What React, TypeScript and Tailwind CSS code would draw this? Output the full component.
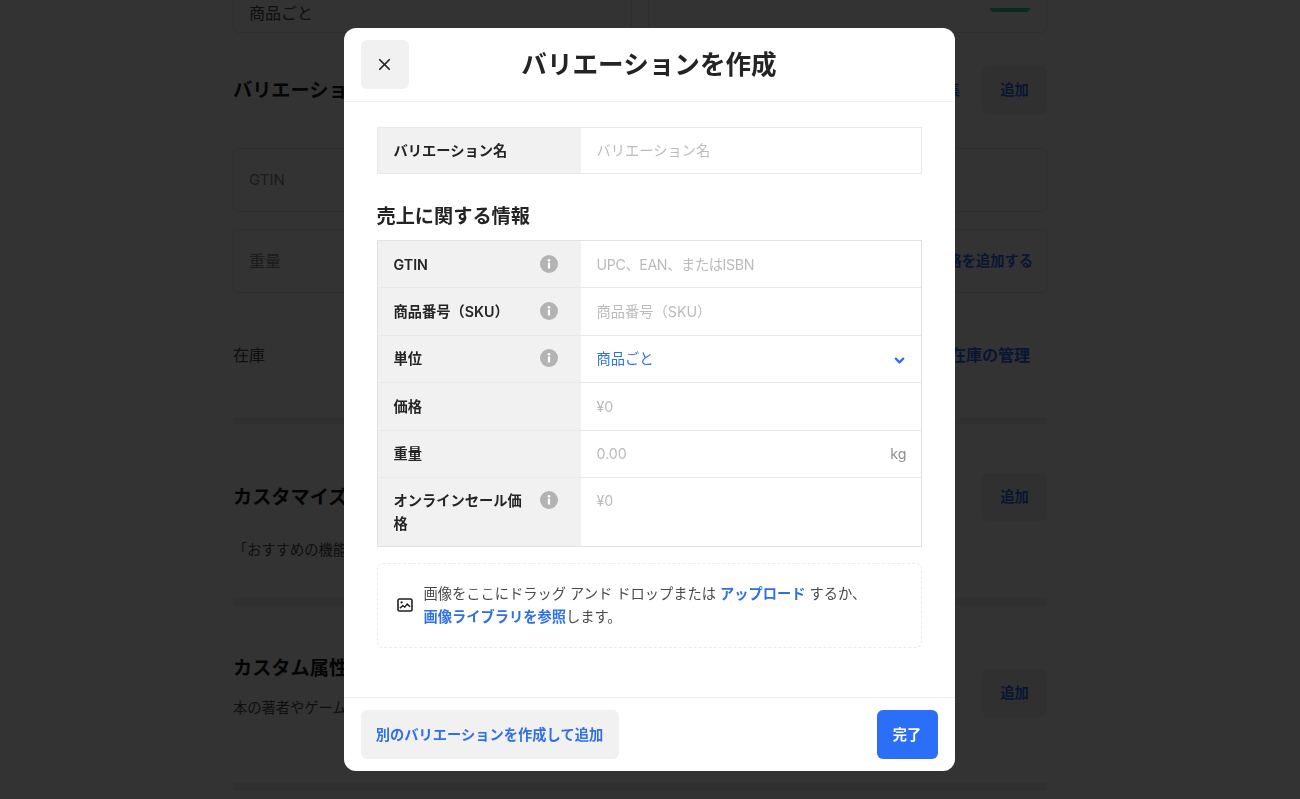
import { ChevronDown, X } from "lucide-react";

const font = "font-['Inter','Noto_Sans_CJK_JP',sans-serif]";

function Info() {
  return (
    <svg width="18" height="18" viewBox="0 0 18 18" className="shrink-0">
      <circle cx="9" cy="9" r="9" fill="#b3b3b3" />
      <circle cx="9" cy="5.2" r="1.3" fill="#fff" />
      <rect x="7.9" y="7.6" width="2.2" height="6" rx="0.4" fill="#fff" />
    </svg>
  );
}

function AddButton() {
  return (
    <button className="w-[65px] h-[48px] rounded-md bg-[#f0f0f0] text-[#2b6ef7] text-[14.25px] font-semibold">追加</button>
  );
}

function Row({
  label,
  info,
  value,
  last,
  height,
  top = "pt-[11.5px]",
  children,
}: {
  label: string;
  info?: boolean;
  value?: string;
  last?: boolean;
  height: string;
  top?: string;
  children?: React.ReactNode;
}) {
  return (
    <div className={`flex ${height} ${last ? "" : "border-b border-[#e9e9e9]"}`}>
      <div className={`w-[203px] shrink-0 bg-[#f1f1f1] pl-[16px] pr-[23px] ${top} flex justify-between items-start gap-2`}>
        <span className="text-[14.25px] font-semibold leading-[23px] text-[#242424]">{label}</span>
        {info && (
          <span className="pt-[2px]">
            <Info />
          </span>
        )}
      </div>
      <div className={`flex-1 pl-[16px] pr-[14px] ${top} flex justify-between items-start text-[14.25px] leading-[23px] text-[#bbbbbb]`}>
        {value && <span>{value}</span>}
        {children}
      </div>
    </div>
  );
}

export default function App() {
  return (
    <div className={`${font} relative h-[799px] w-full overflow-hidden bg-white text-[#1a1a1a]`}>
      <div className="ml-[233px] w-[814px]">
        <div className="flex gap-4 h-[33px]">
          <div className="w-[399px] border border-t-0 border-[#e5e5e5] rounded-b-md px-[15px] text-base leading-[26px] text-[#4a4a4a]">商品ごと</div>
          <div className="w-[399px] border border-t-0 border-[#e5e5e5] rounded-b-md flex justify-end pr-[16px]">
            <div className="mt-[8px] w-[40px] h-[4px] bg-[#2fd69b] rounded-b-md" />
          </div>
        </div>

        <div className="flex items-center justify-between mt-[33px] h-[48px]">
          <h2 className="text-[19.2px] font-bold">バリエーション</h2>
          <div className="flex items-center gap-[22px]">
            <span className="text-[14.25px] font-semibold text-[#2b6ef7]">編集</span>
            <AddButton />
          </div>
        </div>

        <div className="mt-[34px] h-[64px] border border-[#e5e5e5] rounded-md px-[15px] flex items-center text-[15px] text-[#8a8a8a]">GTIN</div>
        <div className="mt-[17px] h-[64px] border border-[#e5e5e5] rounded-md pl-[15px] pr-[13px] flex items-center justify-between text-[#8a8a8a]">
          <span className="text-base">重量</span>
          <span className="text-[14.25px] font-semibold text-[#2b6ef7]">規格を追加する</span>
        </div>

        <div className="mt-[49px] h-[26px] flex items-center justify-between pr-[17px]">
          <span className="text-base text-[#4a4a4a]">在庫</span>
          <span className="text-base font-semibold text-[#2b6ef7]">在庫の管理</span>
        </div>

        <div className="mt-[49px] h-[7px] bg-[#f0f0f0]" />

        <div className="mt-[49px] h-[48px] flex items-center justify-between">
          <h2 className="text-[19.2px] font-bold">カスタマイズ</h2>
          <AddButton />
        </div>
        <p className="mt-[17px] text-[14.25px] leading-[24px] text-[#4a4a4a]">「おすすめの機能」</p>

        <div className="mt-[36px] h-[8px] bg-[#f0f0f0]" />

        <div className="mt-[63px] h-[48px] flex justify-between">
          <h2 className="text-[19.2px] font-bold leading-[20px] -mt-[11px]">カスタム属性</h2>
          <AddButton />
        </div>
        <p className="-mt-[21px] text-[14.25px] leading-[24px] text-[#4a4a4a]">本の著者やゲーム</p>

        <div className="mt-[63px] h-[8px] bg-[#f0f0f0]" />
      </div>

      <div className="fixed inset-0 bg-black/80 flex justify-center items-start pt-[28px] pr-[2px]">
        <div className="w-[611px] h-[743px] bg-white rounded-xl flex flex-col overflow-hidden">
          <div className="relative h-[74px] shrink-0 border-b border-[#f0f0f0] flex items-center justify-center">
            <button className="absolute left-[17px] top-[12px] w-[48px] h-[49px] rounded-md bg-[#f1f1f1] flex items-center justify-center text-[#242424]">
              <X size={19} strokeWidth={2.2} />
            </button>
            <h1 className="text-[25.6px] font-bold text-[#242424] leading-[36px]">バリエーションを作成</h1>
          </div>

          <div className="flex-1 px-[33px] pt-[25px]">
            <div className="border border-[#e9e9e9]">
              <Row label="バリエーション名" value="バリエーション名" last height="h-[45px]" top="pt-[10.5px]" />
            </div>

            <h2 className="mt-[28px] text-[19.2px] font-semibold leading-[28px] text-[#242424]">売上に関する情報</h2>

            <div className="mt-[10px] border border-[#e2e2e2]">
              <Row label="GTIN" info height="h-[47.4px]">
                <span className="flex-1 tracking-[-0.4px]">UPC、EAN、またはISBN</span>
              </Row>
              <Row label="商品番号（SKU）" info value="商品番号（SKU）" height="h-[47.4px]" />
              <Row label="単位" info height="h-[47.4px]">
                <span className="flex-1 text-[#2f6fe8]">商品ごと</span>
                <ChevronDown size={15} strokeWidth={3.5} className="text-[#2b6ef7] mt-[6px]" />
              </Row>
              <Row label="価格" value="¥0" height="h-[47.4px]" />
              <Row label="重量" value="0.00" height="h-[47.4px]">
                <span className="text-[#8f8f8f]">kg</span>
              </Row>
              <Row label="オンラインセール価格" info value="¥0" last height="h-[68px]" />
            </div>

            <div className="mt-[16px] h-[85px] border border-dashed border-[#ececec] rounded-md flex items-center pl-[19px] pr-[40px] gap-[11px]">
              <svg width="16" height="14" viewBox="0 0 16 14" className="shrink-0" fill="none" stroke="#1f1f1f">
                <rect x="1" y="1" width="14" height="12" rx="1.5" strokeWidth="1.6" />
                <circle cx="4.6" cy="4.4" r="1.1" fill="#1f1f1f" stroke="none" />
                <path d="M2.8 10.2l3-2.6 2 1.5 2.4-3 3 2.6" strokeWidth="1.4" />
              </svg>
              <p className="text-[14.25px] leading-[23px] text-[#4a4a4a]">
                画像をここにドラッグ アンド ドロップまたは <span className="font-semibold text-[#2f6fe8]">アップロード</span> するか、
                <br />
                <span className="font-semibold text-[#2f6fe8]">画像ライブラリを参照</span>します。
              </p>
            </div>
          </div>

          <div className="h-[74px] shrink-0 border-t border-[#f0f0f0] px-[17px] pt-[12px] flex justify-between items-start">
            <button className="h-[49px] w-[258px] rounded-md bg-[#f1f1f1] text-[14.25px] font-semibold text-[#2f6fe8]">別のバリエーションを作成して追加</button>
            <button className="h-[49px] w-[61px] rounded-md bg-[#2b6ef7] text-[14.25px] font-semibold text-white">完了</button>
          </div>
        </div>
      </div>
    </div>
  );
}
